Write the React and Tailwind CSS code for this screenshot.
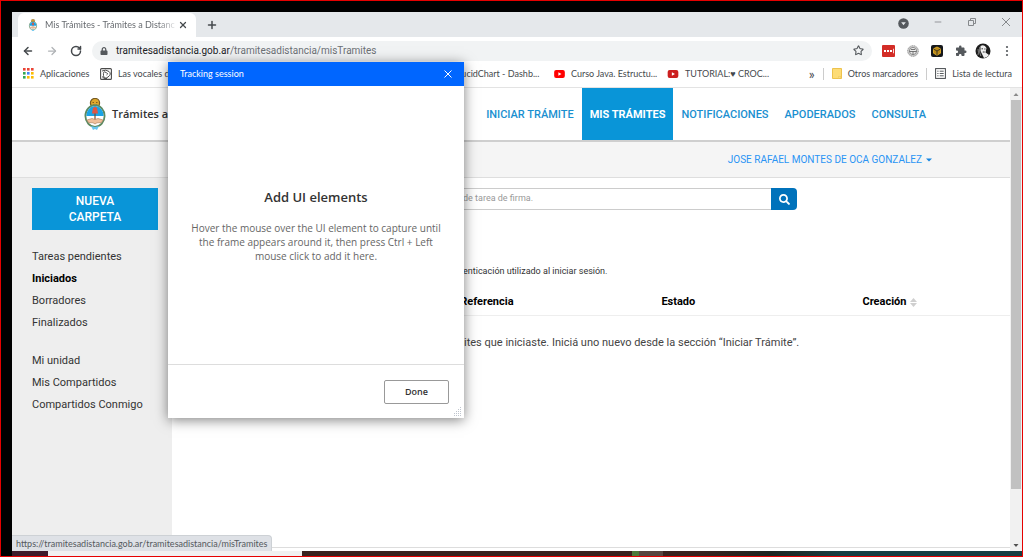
import React from "react";
import { ArrowLeft, ArrowRight, RotateCw, Plus, X, Minus, Star } from "lucide-react";
import { FaSearch, FaLock } from "react-icons/fa";
import { MdExtension } from "react-icons/md";

function Crest({ className }) {
  return (
    <svg viewBox="0 0 22 32" className={className} aria-hidden="true">
      <circle cx="11" cy="5" r="4.6" fill="#e0a92e" stroke="#765b22" strokeWidth="1.2" />
      <path d="M8.5 4.5h1.5M12 4.5h1.5M9 7q2 1 4 0" stroke="#6b4c16" strokeWidth="0.8" fill="none" />
      <ellipse cx="11" cy="18" rx="9.6" ry="10.8" fill="#fff" stroke="#5d8a62" strokeWidth="1.8" />
      <path d="M2.3 18a8.7 9.9 0 0 1 17.4 0z" fill="#1ba4e6" />
      <path d="M11 12v11" stroke="#7a4a2c" strokeWidth="1.2" />
      <path d="M9 10q2-2 4 0l1 5.5H8z" fill="#e05643" />
      <path d="M3 22l5-1.5 3 1 3-1 5 1.5-1.5 2.5-4.5.3-2 1.2-2-1.2-4.500-.3z" fill="#efc09c" stroke="#a9774f" strokeWidth="0.6" />
      <path d="M7 28l4 1 4-1-2 4-2-1-2 1z" fill="#66c6f2" />
    </svg>
  );
}

function YouTube({ className }) {
  return (
    <svg viewBox="0 0 12 9" className={className} aria-hidden="true">
      <rect width="12" height="9" rx="2.2" fill="currentColor" />
      <path d="M4.700 2.500v4l3.500-2z" fill="#fff" />
    </svg>
  );
}

function AppsGrid() {
  const colors = ["#ea4335", "#ea4335", "#ea4335", "#34a853", "#4285f4", "#fbbc04", "#34a853", "#fbbc04", "#fbbc04"];
  return (
    <svg viewBox="0 0 11 11" className="size-[11px]" aria-hidden="true">
      {colors.map((c, i) => (
        <rect key={i} x={(i % 3) * 4} y={Math.floor(i / 3) * 4} width="2.600" height="2.600" fill={c} />
      ))}
    </svg>
  );
}

function TabStrip() {
  return (
    <div className="flex h-[25px] items-end bg-[#e5e8eb] pl-1.5">
      <div className="flex h-6 w-[178px] items-center rounded-t-md bg-white pl-2.5 pr-2">
        <Crest className="h-3 w-[10px]" />
        <span className="ml-[7px] flex-1 whitespace-nowrap bg-linear-to-r from-[#5f6368] from-85% to-transparent bg-clip-text text-transparent">
          Mis Trámites - Trámites a Distanc
        </span>
        <button aria-label="Cerrar pestaña" className="text-[#45494d]"><X className="size-2.5" strokeWidth={3} /></button>
      </div>
      <button aria-label="Nueva pestaña" className="ml-2.5 mb-1.5 text-[#45494d]"><Plus className="size-3" strokeWidth={3} /></button>
      <div className="mb-2 ml-auto flex items-center gap-6 pr-[11px] text-[#85888b]">
        <button aria-label="Buscar pestañas" className="pt-1">
          <svg viewBox="0 0 11 11" className="size-[11px]"><circle cx="5.500" cy="5.500" r="5.300" fill="#55595d" /><path d="M3.200 4.200h4.600L5.500 7.300z" fill="#e5e8eb" /></svg>
        </button>
        <button aria-label="Minimizar"><Minus className="size-2.5" strokeWidth={2} /></button>
        <button aria-label="Restaurar">
          <svg viewBox="0 0 10 10" className="size-2.5" fill="none" stroke="currentColor" strokeWidth="1"><path d="M1.500 3.500h5v5h-5zM3.500 3.500v-2h5v5h-2" /></svg>
        </button>
        <button aria-label="Cerrar">
          <svg viewBox="0 0 10 10" className="size-2.5" stroke="currentColor" strokeWidth="1"><path d="M1 1l8 8M9 1L1 9" /></svg>
        </button>
      </div>
    </div>
  );
}

function Toolbar() {
  return (
    <div className="flex h-[27px] items-center bg-white pl-2.5 pr-[11px]">
      <div className="flex items-center gap-3 text-[#45494d]">
        <button aria-label="Atrás"><ArrowLeft className="size-3" strokeWidth={3} /></button>
        <button aria-label="Adelante" className="text-[#b0b3b6]"><ArrowRight className="size-3" strokeWidth={2.5} /></button>
        <button aria-label="Recargar"><RotateCw className="size-3" strokeWidth={3} /></button>
      </div>
      <div className="ml-2.5 flex h-5 flex-1 items-center rounded-full bg-[#f1f3f4] pl-2 pr-2">
        <FaLock className="size-2 text-[#55595d]" />
        <span className="ml-2 flex-1 font-[Roboto,sans-serif] text-[10px] text-[#6c7074]">
          <span className="text-[#202124]">tramitesadistancia.gob.ar</span>/tramitesadistancia/misTramites
        </span>
        <button aria-label="Marcar"><Star className="size-[11px] text-[#55595d]" strokeWidth={2.4} /></button>
      </div>
      <div className="ml-2.5 flex items-center gap-3">
        <button aria-label="Extensión roja">
          <svg viewBox="0 0 13 13" className="h-3 w-[13px]" preserveAspectRatio="none"><rect width="13" height="13" rx="1" fill="#d32d27" /><path d="M2 5.500h2v2H2zM5 5.500h2v2H5zM8 5.500h2v2H8zM11 4h.8v5H11z" fill="#fff" /></svg>
        </button>
        <button aria-label="Extensión gris">
          <svg viewBox="0 0 12 12" className="size-3"><circle cx="6" cy="6" r="5.300" fill="#d2d2d2" stroke="#888" strokeDasharray="1.200 0.600" /><circle cx="6" cy="6" r="3.600" fill="#eee" stroke="#777" strokeWidth="0.8" /><path d="M2.500 6.500h7M4 4.500h4M6 6.500v3" stroke="#666" strokeWidth=".9" /></svg>
        </button>
        <button aria-label="Extensión amarilla">
          <svg viewBox="0 0 12 12" className="size-3"><rect width="12" height="12" rx="2" fill="#16181c" /><path d="M6 2l3.500 1.800v4.400L6 10.200 2.500 8.200V3.800z" fill="#b98919" stroke="#f0b72a" strokeWidth="0.800" /><path d="M2.500 4L6 6l3.500-2M6 6v4" stroke="#16181c" strokeWidth="0.700" fill="none" /></svg>
        </button>
        <button aria-label="Extensiones"><MdExtension className="size-3 text-[#55595d]" /></button>
        <button aria-label="Perfil">
          <svg viewBox="0 0 16 16" className="-ml-1 size-4"><circle cx="8" cy="8" r="7.500" fill="#1c1c1c" /><path d="M5.500 3q4-2 6 2l-1 4.500 3.500 2.500q-2 3-5 3l-2-4-1.500-3z" fill="#eee" /><path d="M6.500 5.800h1.500M9.300 6h1.200M7.800 9h1.900" stroke="#222" strokeWidth="0.900" /><path d="M3 6q1 4 0 6M4.800 4q-1 5 1 9" stroke="#aaa" strokeWidth="0.700" fill="none" /></svg>
        </button>
        <button aria-label="Menú">
          <svg viewBox="0 0 8 12" className="h-3 w-2" fill="#55595d"><circle cx="4" cy="2" r="1.100" /><circle cx="4" cy="6" r="1.100" /><circle cx="4" cy="10" r="1.100" /></svg>
        </button>
      </div>
    </div>
  );
}

function Bookmarks() {
  return (
    <div className="flex h-6 items-center whitespace-nowrap border-b border-[#e3e3e3] bg-white pl-[11px] pr-2.5 pb-1 text-[#45494d]">
      <a href="#apps" className="flex w-[77px] items-center gap-1.5"><AppsGrid />Aplicaciones</a>
      <a href="#vocales" className="flex w-[357px] items-center gap-1.5">
        <svg viewBox="0 0 12 12" className="size-3" fill="none" stroke="#4a4a4a"><rect x="0.600" y="0.600" width="10.800" height="10.800" rx="1" strokeWidth="1.100" /><path d="M2 3q4-2 7 .5t-1 5.500-4.500-1.500 1.500-3.500 2.500 1.500-1 1.500M2 8.500Q3.500 11 7 10.500" strokeWidth="1" /></svg>
        Las vocales de
      </a>
      <a href="#lucid" className="w-[97px]">LucidChart - Dashb...</a>
      <a href="#java" className="flex w-[113px] items-center gap-1.5"><YouTube className="h-2 w-[11px] text-[#f00]" />Curso Java. Estructu...</a>
      <a href="#croc" className="flex items-center gap-1.5"><YouTube className="h-2 w-[12px] text-[#cc1f1f]" />TUTORIAL:♥ CROC...</a>
      <button className="ml-auto pr-2 text-sm leading-none" aria-label="Más marcadores">»</button>
      <div className="h-3 w-px bg-[#ccc]" />
      <a href="#otros" className="ml-2 flex items-center gap-1.5">
        <svg viewBox="0 0 10 11" className="h-[11px] w-2.5"><path d="M.5.500h9v10H.5z" fill="#fddc76" stroke="#edc24d" /><path d="M6.500 10.500v-2h3z" fill="#fff1bd" stroke="#edc24d" strokeWidth=".6" /></svg>
        Otros marcadores
      </a>
      <div className="ml-2 h-3 w-px bg-[#ccc]" />
      <a href="#lectura" className="ml-2 flex items-center gap-1.5">
        <svg viewBox="0 0 11 11" className="size-[11px]" fill="none" stroke="#45494d"><rect x=".6" y=".6" width="9.800" height="9.800" /><path d="M2.300 3.200h1.200M2.300 5.500h1.200M2.300 7.800h1.200M4.700 3.200h4M4.700 5.500h4M4.700 7.800h4" strokeWidth=".9" /></svg>
        Lista de lectura
      </a>
    </div>
  );
}

function SiteHeader() {
  return (
    <header>
      <div className="flex h-[54px] items-center border-b-2 border-[#cfcfcf] bg-white pl-[72px] pr-[76px]">
        <Crest className="h-8 w-[22px]" />
        <span className="ml-1.5 whitespace-nowrap font-['Open_Sans',sans-serif] text-[11px] font-semibold text-[#333]">Trámites a</span>
        <nav className="ml-auto flex h-full items-center whitespace-nowrap text-[11px] leading-4 font-medium text-[#1a8fd0]">
          <a href="#iniciar" className="px-2 pt-0.5">INICIAR TRÁMITE</a>
          <a href="#mis" className="flex h-full items-center bg-[#0995d8] px-2 pt-0.5 font-bold text-white">MIS TRÁMITES</a>
          <a href="#notificaciones" className="px-2 pt-0.5">NOTIFICACIONES</a>
          <a href="#apoderados" className="px-2 pt-0.5">APODERADOS</a>
          <a href="#consulta" className="px-2 pt-0.5">CONSULTA</a>
        </nav>
      </div>
      <div className="flex h-9 items-center justify-end border-b border-[#dedede] bg-[#f5f5f5] pr-[78px] text-[10px] text-[#2a94f4]">
        <button className="flex items-center gap-1">
          JOSE RAFAEL MONTES DE OCA GONZALEZ
          <svg viewBox="0 0 6 4" className="h-1 w-1.5" fill="#1585e0"><path d="M0 .5h6L3 3.500z" /></svg>
        </button>
      </div>
    </header>
  );
}

function Sidebar() {
  const link = "block leading-[22px]";
  return (
    <aside className="w-40 shrink-0 bg-[#eeeeee] pl-5 pr-3.5 pt-2.5 text-[11px] text-[#333]">
      <button className="w-full bg-[#0995d8] px-8 py-[5px] text-xs leading-4 font-medium text-white">NUEVA CARPETA</button>
      <nav className="mt-4 whitespace-nowrap">
        <a href="#tareas" className={link}>Tareas pendientes</a>
        <a href="#iniciados" className="block leading-[22px] font-bold text-black">Iniciados</a>
        <a href="#borradores" className={link}>Borradores</a>
        <a href="#finalizados" className={link}>Finalizados</a>
        <div className="mt-4">
          <a href="#unidad" className={link}>Mi unidad</a>
          <a href="#compartidos" className={link}>Mis Compartidos</a>
          <a href="#conmigo" className={link}>Compartidos Conmigo</a>
        </div>
      </nav>
    </aside>
  );
}

function Main() {
  return (
    <main className="min-w-0 flex-1 bg-white pt-2.5">
      <form className="mr-[213px] flex h-[22px]">
        <input aria-label="Buscar" placeholder="de tarea de firma." className="min-w-0 flex-1 border border-r-0 border-[#ccc] pl-[290px] text-[9px] placeholder:text-[#999]" />
        <button type="button" aria-label="Buscar" className="flex w-[26px] items-center justify-center rounded-r-sm bg-[#0072bb] text-white"><FaSearch className="size-[11px]" /></button>
      </form>
      <p className="mt-[54px] pl-[291px] text-[9px] leading-3.5 text-[#333]">enticación utilizado al iniciar sesión.</p>
      <table className="mt-3 w-full table-fixed text-left text-[11px]">
        <thead>
          <tr className="h-[25px] border-b border-[#eee] text-black">
            <th className="w-[34.4%]"></th>
            <th className="w-[24%] font-bold">Referencia</th>
            <th className="w-[24%] font-bold">Estado</th>
            <th className="font-bold">
              <button className="flex items-center gap-1">
                Creación
                <svg viewBox="0 0 7 9" className="h-[9px] w-[7px]" fill="#cfcfcf"><path d="M0 4h7L3.500 0zM0 5h7L3.500 9z" /></svg>
              </button>
            </th>
          </tr>
        </thead>
        <tbody>
          <tr className="h-14"><td colSpan={4} className="pl-[292px] text-[#444]">ites que iniciaste. Iniciá uno nuevo desde la sección “Iniciar Trámite”.</td></tr>
        </tbody>
      </table>
    </main>
  );
}

function Scrollbar() {
  return (
    <div className="flex w-3 shrink-0 flex-col items-center bg-[#f1f1f1] px-px">
      <svg viewBox="0 0 12 12" className="size-3" fill="#8a8a8a"><path d="M3.500 8h5L6 5z" /></svg>
      <div className="w-full grow-[39] bg-[#c1c1c1]" />
      <div className="grow-[5]" />
      <svg viewBox="0 0 12 12" className="size-3" fill="#505050"><path d="M3.500 5h5L6 8z" /></svg>
    </div>
  );
}

function TrackingDialog() {
  return (
    <section role="dialog" aria-labelledby="tracking-title" className="absolute left-[167px] top-[61px] flex h-[356px] w-[296px] flex-col bg-white font-['Open_Sans',sans-serif] shadow-[0_2px_12px_rgba(0,0,0,0.5)]">
      <div className="flex h-6 items-center justify-between bg-[#0066ff] pl-3 pr-3 text-[9px] text-white">
        <h2 id="tracking-title" className="font-[Lato,sans-serif]">Tracking session</h2>
        <button aria-label="Close">
          <svg viewBox="0 0 8 8" className="size-2" stroke="white" strokeWidth="1"><path d="M.5.500l7 7M7.500.500l-7 7" /></svg>
        </button>
      </div>
      <div className="flex flex-1 flex-col items-center justify-center px-4 text-center">
        <h3 className="text-[13px] leading-5 font-semibold text-[#333]">Add UI elements</h3>
        <p className="mt-3.5 text-[10px] leading-3.5 text-[#666]">
          Hover the mouse over the UI element to capture until<br />the frame appears around it, then press Ctrl + Left<br />mouse click to add it here.
        </p>
      </div>
      <div className="flex h-[54px] items-center justify-end border-t border-[#ddd] pr-[15px]">
        <button className="h-6 w-[65px] rounded-xs border border-[#999] text-[9px] font-semibold text-[#333]">Done</button>
      </div>
      <svg viewBox="0 0 9 9" className="absolute bottom-0.5 right-0.5 size-[9px]" fill="#bfc5ce"><path d="M7 0h1v1H7zM5 2h1v1H5zM7 2h1v1H7zM3 4h1v1H3zM5 4h1v1H5zM7 4h1v1H7zM1 6h1v1H1zM3 6h1v1H3zM5 6h1v1H5zM7 6h1v1H7zM1 8h1v1H1zM3 8h1v1H3zM5 8h1v1H5zM7 8h1v1H7z" /></svg>
    </section>
  );
}

export default function App() {
  return (
    <div className="relative flex min-h-screen flex-col border border-[#e60000] bg-black pl-[11px] pt-[11px] font-[Roboto,sans-serif]">
      <div className="font-[Lato,sans-serif] text-[9px]">
        <TabStrip />
        <Toolbar />
        <Bookmarks />
      </div>
      <div className="relative flex flex-1 bg-white">
        <div className="flex min-w-0 flex-1 flex-col">
          <SiteHeader />
          <div className="flex flex-1">
            <Sidebar />
            <Main />
          </div>
          <div className="h-1 border-t border-[#ddd]" />
        </div>
        <Scrollbar />
        <div className="absolute bottom-0 left-0 rounded-tr border-r border-t border-[#cdd1d5] bg-[#dee1e6] px-1 font-[Lato,sans-serif] text-[9px] leading-[15px] text-[#55595d]">
          https://tramitesadistancia.gob.ar/tramitesadistancia/misTramites
        </div>
      </div>
      <div className="flex h-[5px]">
        <div className="w-9 bg-[#3e1b2b]" />
        <div className="w-[254px] bg-[#f1f1f1]" />
        <div className="flex flex-1 bg-linear-to-r from-[#3a231f] from-55% via-[#1d2420] via-65% to-[#173e42] to-75%">
          <div className="ml-[330px] w-[7px] bg-[#4c7a39]" />
          <div className="w-6 bg-[#584641]" />
        </div>
      </div>
      <TrackingDialog />
    </div>
  );
}
